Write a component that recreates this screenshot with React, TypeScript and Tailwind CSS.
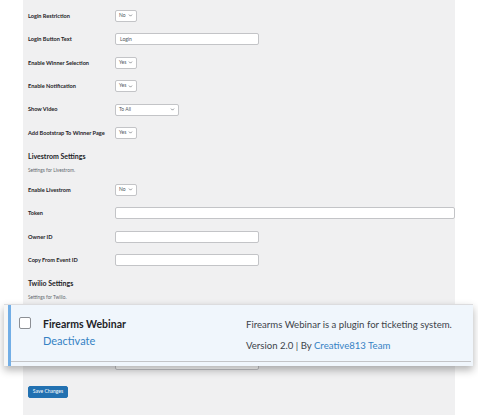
import { ChevronDown } from 'lucide-react';

function Select({ value, width = 'w-[22px]' }: { value: string; width?: string }) {
    return (
        <div className={`${width} h-[12px] bg-white border border-[#c3c4c7] rounded-[2px] flex items-center justify-between px-[3px] text-[5px] text-[#50575e]`}>
            <span>{value}</span>
            <ChevronDown className="w-[5px] h-[5px]" strokeWidth={3} />
        </div>
    );
}

function Row({ label, children }: { label: string; children?: React.ReactNode }) {
    return (
        <div className="h-[23.4px] flex items-center">
            <div className="w-[87px] text-[5.6px] font-bold text-[#1d2327] whitespace-nowrap">{label}</div>
            {children}
        </div>
    );
}

function Input({ value = '', full = false }: { value?: string; full?: boolean }) {
    return (
        <div className={`${full ? 'flex-1' : 'w-[144px]'} h-[12px] bg-white border border-[#c3c4c7] rounded-[2px] flex items-center px-[4px] text-[5px] text-[#50575e]`}>
            {value}
        </div>
    );
}

export default function App() {
    return (
        <div className="relative w-[478px] h-[415px] bg-white overflow-hidden" style={{ fontFamily: 'Lato, "Noto Sans", sans-serif' }}>

            <div className="ml-[23px] w-[432px] h-[415px] bg-[#f0f0f1] pl-[5px] pt-[4.3px] overflow-hidden">

                <Row label="Login Restriction"><Select value="No" /></Row>
                <Row label="Login Button Text"><Input value="Login" /></Row>
                <Row label="Enable Winner Selection"><Select value="Yes" /></Row>
                <Row label="Enable Notification"><Select value="Yes" /></Row>
                <Row label="Show Video"><Select value="To All" width="w-[64px]" /></Row>
                <Row label="Add Bootstrap To Winner Page"><Select value="Yes" /></Row>

                <div className="mt-[6.3px] h-[10px] leading-[10px] text-[7px] font-bold text-[#1d2327]">Livestrom Settings</div>
                <div className="mt-[6px] h-[6px] leading-[6px] text-[4.8px] text-[#646970]">Settings for Livestrom.</div>

                <div className="mt-[5.3px]">
                    <Row label="Enable Livestrom"><Select value="No" /></Row>
                    <Row label="Token"><Input full /></Row>
                    <Row label="Owner ID"><Input /></Row>
                    <Row label="Copy From Event ID"><Input /></Row>
                </div>

                <div className="mt-[6.1px] h-[10px] leading-[10px] text-[7px] font-bold text-[#1d2327]">Twilio Settings</div>
                <div className="mt-[6px] h-[6px] leading-[6px] text-[4.8px] text-[#646970]">Settings for Twilio.</div>

                {/* rows hidden under the plugin card */}
                <div className="mt-[5.3px]">
                    <Row label=""><Input /></Row>
                    <Row label=""><Input /></Row>
                    <Row label=""><Input /></Row>
                </div>

                <button className="mt-[8.5px] h-[12px] w-[40px] bg-[#2271b1] border border-[#2271b1] rounded-[2px] text-white text-[5px] leading-none">
                    Save Changes
                </button>
            </div>

            {/* plugin row popped out over the settings */}
            <div className="absolute left-[4px] top-[304px] w-[469px] h-[62px] bg-[#f0f6fc] border-t border-[#dcdcde] shadow-[0_4px_8px_rgba(0,0,0,0.3)] flex">
                <div className="w-[4px] bg-[#f6f7f7]"></div>
                <div className="w-[3px] bg-[#72aee6]"></div>
                <div className="flex-1 flex flex-col">
                    <div className="flex-1 flex">
                        <div className="w-[8px]"></div>
                        <div className="pt-[12px]">
                            <div className="w-[12px] h-[12px] bg-white border border-[#8c8f94] rounded-[2px]"></div>
                        </div>
                        <div className="w-[215px] pl-[12px] pt-[11px]">
                            <div className="text-[10.5px] leading-[16px] font-bold text-[#1d2327] whitespace-nowrap">Firearms Webinar</div>
                            <div className="mt-[1px] text-[11px] leading-[16px] text-[#3582c4]">Deactivate</div>
                        </div>
                        <div className="pt-[12px] text-[9.6px] text-[#3c434a] whitespace-nowrap">
                            <div className="leading-[15px]">Firearms Webinar is a plugin for ticketing system.</div>
                            <div className="mt-[6px] leading-[15px]">Version 2.0 | By <span className="text-[#3582c4]">Creative813 Team</span></div>
                        </div>
                    </div>
                    <div className="h-px bg-[#c3c4c7] mr-[2px]"></div>
                    <div className="h-[4px]"></div>
                </div>
            </div>

        </div>
    );
}
